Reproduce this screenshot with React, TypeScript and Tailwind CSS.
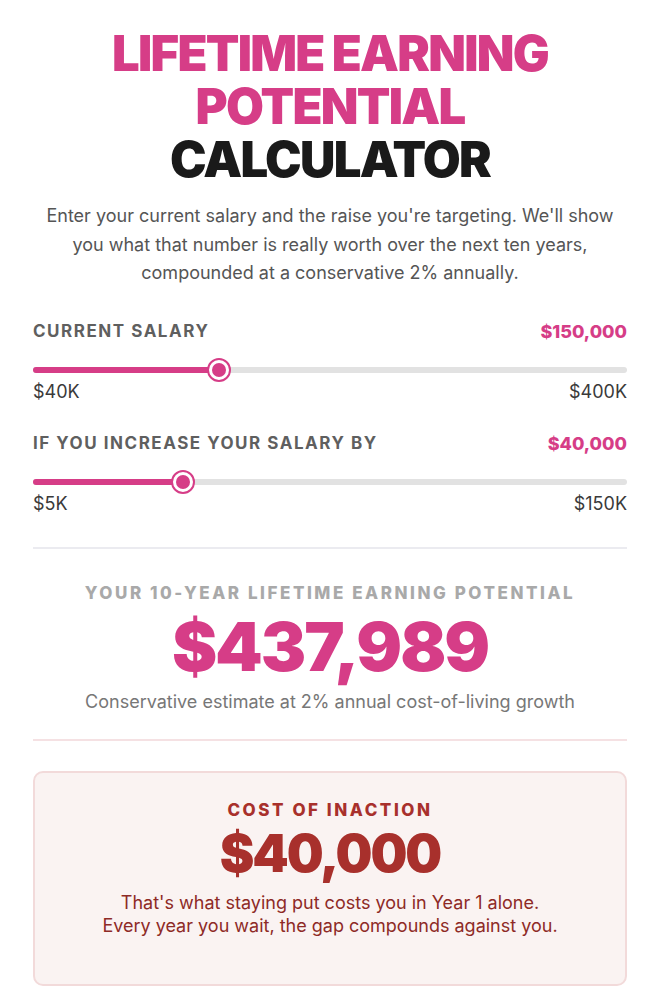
import React, { useState } from "react";

function fmt(n: number) {
  return "$" + Math.round(n).toLocaleString("en-US");
}

function Slider({
  label,
  value,
  min,
  max,
  minLabel,
  maxLabel,
  onChange,
}: {
  label: string;
  value: number;
  min: number;
  max: number;
  minLabel: string;
  maxLabel: string;
  onChange: (v: number) => void;
}) {
  const frac = (value - min) / (max - min);
  // thumb travels inside the track the way a native range thumb does (24px thumb)
  const pos = `calc(12px + ${frac} * (100% - 24px))`;
  return (
    <div className="flex flex-col">
      <div className="flex items-center justify-between">
        <span className="text-[17px] font-bold leading-[25px] tracking-[0.09em] text-[#5f5f5f]">{label}</span>
        <span className="text-[18px] font-extrabold leading-[25px] text-[#d63d87]">{fmt(value)}</span>
      </div>
      <div className="relative mt-[14px] h-[24px]">
        <div className="absolute left-0 right-0 top-[9px] h-[6px] rounded-full bg-[#e2e2e2]" />
        <div
          className="absolute left-0 top-[9px] h-[6px] rounded-full bg-[#d63d87]"
          style={{ width: pos }}
        />
        <div
          className="absolute top-0 h-[24px] w-[24px] -translate-x-1/2 rounded-full border-[2px] border-[#d63d87] bg-white p-[3px]"
          style={{ left: pos }}
        >
          <div className="h-full w-full rounded-full bg-[#d63d87]" />
        </div>
        <input
          type="range"
          min={min}
          max={max}
          step={1000}
          value={value}
          onChange={(e) => onChange(Number(e.target.value))}
          className="absolute inset-0 w-full cursor-pointer opacity-0"
        />
      </div>
      <div className="mt-[-2px] flex justify-between text-[18px] leading-[24px] text-[#3a3a3a]">
        <span>{minLabel}</span>
        <span>{maxLabel}</span>
      </div>
    </div>
  );
}

export default function App() {
  const [salary, setSalary] = useState(150000);
  const [raise, setRaise] = useState(40000);

  // Ten years of the raise, growing 2% per year
  let total = 0;
  for (let i = 0; i < 10; i++) total += raise * Math.pow(1.02, i);

  return (
    <div
      className="min-h-screen bg-white px-[33px] pb-[18px] pt-[27px]"
      style={{ fontFamily: "Inter, 'Noto Sans', sans-serif" }}
    >
      <h1 className="text-center text-[49px] font-black uppercase leading-[53px] tracking-[-0.035em]">
        <span className="block text-[#d63d87]">Lifetime Earning</span>
        <span className="block text-[#d63d87]">Potential</span>
        <span className="block text-[#1a1a1a]">Calculator</span>
      </h1>

      <p className="mx-auto mt-[16px] text-center text-[18px] leading-[28.5px] text-[#555]">
        Enter your current salary and the raise you're targeting. We'll show
        <br />
        you what that number is really worth over the next ten years,
        <br />
        compounded at a conservative 2% annually.
      </p>

      <div className="mt-[31px] flex flex-col gap-[27px]">
        <Slider
          label="CURRENT SALARY"
          value={salary}
          min={40000}
          max={400000}
          minLabel="$40K"
          maxLabel="$400K"
          onChange={setSalary}
        />
        <Slider
          label="IF YOU INCREASE YOUR SALARY BY"
          value={raise}
          min={5000}
          max={150000}
          minLabel="$5K"
          maxLabel="$150K"
          onChange={setRaise}
        />
      </div>

      <div className="mt-[31px] border-t-[2px] border-[#ebebf0]" />

      <div className="flex flex-col items-center pb-[25px] pt-[32px] text-center">
        <div className="text-[17px] font-extrabold leading-[25px] tracking-[0.15em] text-[#a9a9a9]">
          YOUR 10-YEAR LIFETIME EARNING POTENTIAL
        </div>
        <div className="mt-[-2px] text-[68px] font-black leading-[84px] tracking-[-0.03em] text-[#d63d87]">
          {fmt(total)}
        </div>
        <div className="mt-[2px] text-[18px] leading-[24px] text-[#777]">
          Conservative estimate at 2% annual cost-of-living growth
        </div>
      </div>

      <div className="border-t-[2px] border-[#f5e1e3]" />

      <div className="mt-[30px] flex flex-col items-center rounded-[10px] border-[2px] border-[#f2dada] bg-[#faf3f2] pb-[47px] pt-[25px] text-center">
        <div className="text-[17px] font-extrabold leading-[25px] tracking-[0.15em] text-[#a8302c]">
          COST OF INACTION
        </div>
        <div className="mt-[0px] text-[52px] font-black leading-[62px] tracking-[-0.04em] text-[#a8302c]">
          {fmt(raise)}
        </div>
        <div className="mt-[6px] text-[18px] leading-[23px] text-[#8e2a26]">
          That's what staying put costs you in Year 1 alone.
          <br />
          Every year you wait, the gap compounds against you.
        </div>
      </div>
    </div>
  );
}
